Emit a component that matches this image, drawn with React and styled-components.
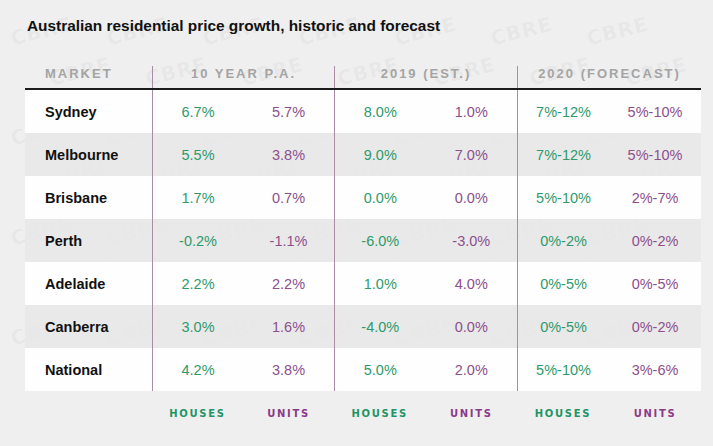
import React from "react";
import styled, { createGlobalStyle } from "styled-components";

const Global = createGlobalStyle`
  html, body { margin: 0; padding: 0; background: #efefef; }
  body { font-family: "Liberation Sans", Arial, sans-serif; }
`;

const Page = styled.div`
  position: relative;
  width: 713px;
  height: 446px;
  overflow: hidden;
  background: #efefef;
  padding: 15px 12px 0 25px;
  box-sizing: border-box;
`;

const Title = styled.h1`
  position: relative;
  z-index: 1;
  margin: 0 0 0 2px;
  font-size: 15.4px;
  line-height: 21px;
  font-weight: 700;
  color: #111;
`;

const Table = styled.div`
  position: relative;
  z-index: 1;
  margin-top: 30px;
  width: 676px;
  display: flex;
  flex-direction: column;
`;

const cols = "127px 91px 91px 91.5px 91.5px 92px 92px";

const HeadRow = styled.div`
  display: grid;
  grid-template-columns: ${cols};
  height: 22px;
  border-bottom: 2px solid #1b1b1b;
`;

const HeadCell = styled.div`
  grid-column: span ${(p) => p.$span || 1};
  font-size: 13px;
  line-height: 16px;
  font-weight: 700;
  letter-spacing: 2px;
  color: #a4a4a4;
  text-align: ${(p) => (p.$left ? "left" : "center")};
  padding-left: ${(p) => (p.$left ? "20px" : "0")};
  border-left: ${(p) => (p.$divider ? "1px solid #a88ca8" : "none")};
`;

const Row = styled.div`
  display: grid;
  grid-template-columns: ${cols};
  height: 43px;
  align-items: stretch;
  background: ${(p) => (p.$alt ? "rgba(232,232,232,0.9)" : "rgba(255,255,255,0.93)")};
`;

const NameCell = styled.div`
  display: flex;
  align-items: center;
  padding-left: 20px;
  font-size: 14.5px;
  font-weight: 700;
  color: #111;
`;

const ValueCell = styled.div`
  display: flex;
  align-items: center;
  justify-content: center;
  font-size: 14.5px;
  color: ${(p) => (p.$kind === "units" ? "#8d4f8d" : "#2e9a6c")};
  border-left: ${(p) => (p.$divider ? "1px solid #a88ca8" : "none")};
`;

const FootRow = styled.div`
  display: grid;
  grid-template-columns: ${cols};
  height: 44px;
  align-items: center;
`;

const FootCell = styled.div`
  text-align: center;
  font-family: "DejaVu Sans", sans-serif;
  font-size: 10px;
  font-weight: 700;
  letter-spacing: 1.7px;
  color: ${(p) => (p.$kind === "units" ? "#8a3a8a" : "#1f9566")};
`;

const Watermarks = styled.div`
  position: absolute;
  inset: 0;
  z-index: 0;
  pointer-events: none;
  display: grid;
  grid-template-columns: repeat(7, 96px);
  grid-auto-rows: 50px;
  padding: 6px 0 0 10px;
`;

const Mark = styled.span`
  font-family: "DejaVu Sans", sans-serif;
  font-weight: 700;
  font-size: 20px;
  letter-spacing: 1px;
  color: rgba(0, 0, 0, 0.045);
  transform: rotate(-14deg) translateX(${(p) => p.$shift}px);
  align-self: center;
  justify-self: start;
`;

const data = [
  ["Sydney", "6.7%", "5.7%", "8.0%", "1.0%", "7%-12%", "5%-10%"],
  ["Melbourne", "5.5%", "3.8%", "9.0%", "7.0%", "7%-12%", "5%-10%"],
  ["Brisbane", "1.7%", "0.7%", "0.0%", "0.0%", "5%-10%", "2%-7%"],
  ["Perth", "-0.2%", "-1.1%", "-6.0%", "-3.0%", "0%-2%", "0%-2%"],
  ["Adelaide", "2.2%", "2.2%", "1.0%", "4.0%", "0%-5%", "0%-5%"],
  ["Canberra", "3.0%", "1.6%", "-4.0%", "0.0%", "0%-5%", "0%-2%"],
  ["National", "4.2%", "3.8%", "5.0%", "2.0%", "5%-10%", "3%-6%"],
];

export default function App() {
  const marks = [];
  for (let r = 0; r < 8; r++) {
    for (let c = 0; c < 7; c++) {
      marks.push(
        <Mark key={`${r}-${c}`} $shift={(r % 2) * 40}>
          CBRE
        </Mark>
      );
    }
  }
  return (
    <>
      <Global />
      <Page>
        <Watermarks aria-hidden="true">{marks}</Watermarks>
        <Title>Australian residential price growth, historic and forecast</Title>
        <Table>
          <HeadRow>
            <HeadCell $left>MARKET</HeadCell>
            <HeadCell $span={2} $divider>10 YEAR P.A.</HeadCell>
            <HeadCell $span={2} $divider>2019 (EST.)</HeadCell>
            <HeadCell $span={2} $divider>2020 (FORECAST)</HeadCell>
          </HeadRow>
          {data.map((row, i) => (
            <Row key={row[0]} $alt={i % 2 === 1}>
              <NameCell>{row[0]}</NameCell>
              {row.slice(1).map((v, j) => (
                <ValueCell
                  key={j}
                  $kind={j % 2 === 0 ? "houses" : "units"}
                  $divider={j % 2 === 0}
                >
                  {v}
                </ValueCell>
              ))}
            </Row>
          ))}
          <FootRow>
            <span />
            {[0, 1, 2, 3, 4, 5].map((j) => (
              <FootCell key={j} $kind={j % 2 === 0 ? "houses" : "units"}>
                {j % 2 === 0 ? "HOUSES" : "UNITS"}
              </FootCell>
            ))}
          </FootRow>
        </Table>
      </Page>
    </>
  );
}
